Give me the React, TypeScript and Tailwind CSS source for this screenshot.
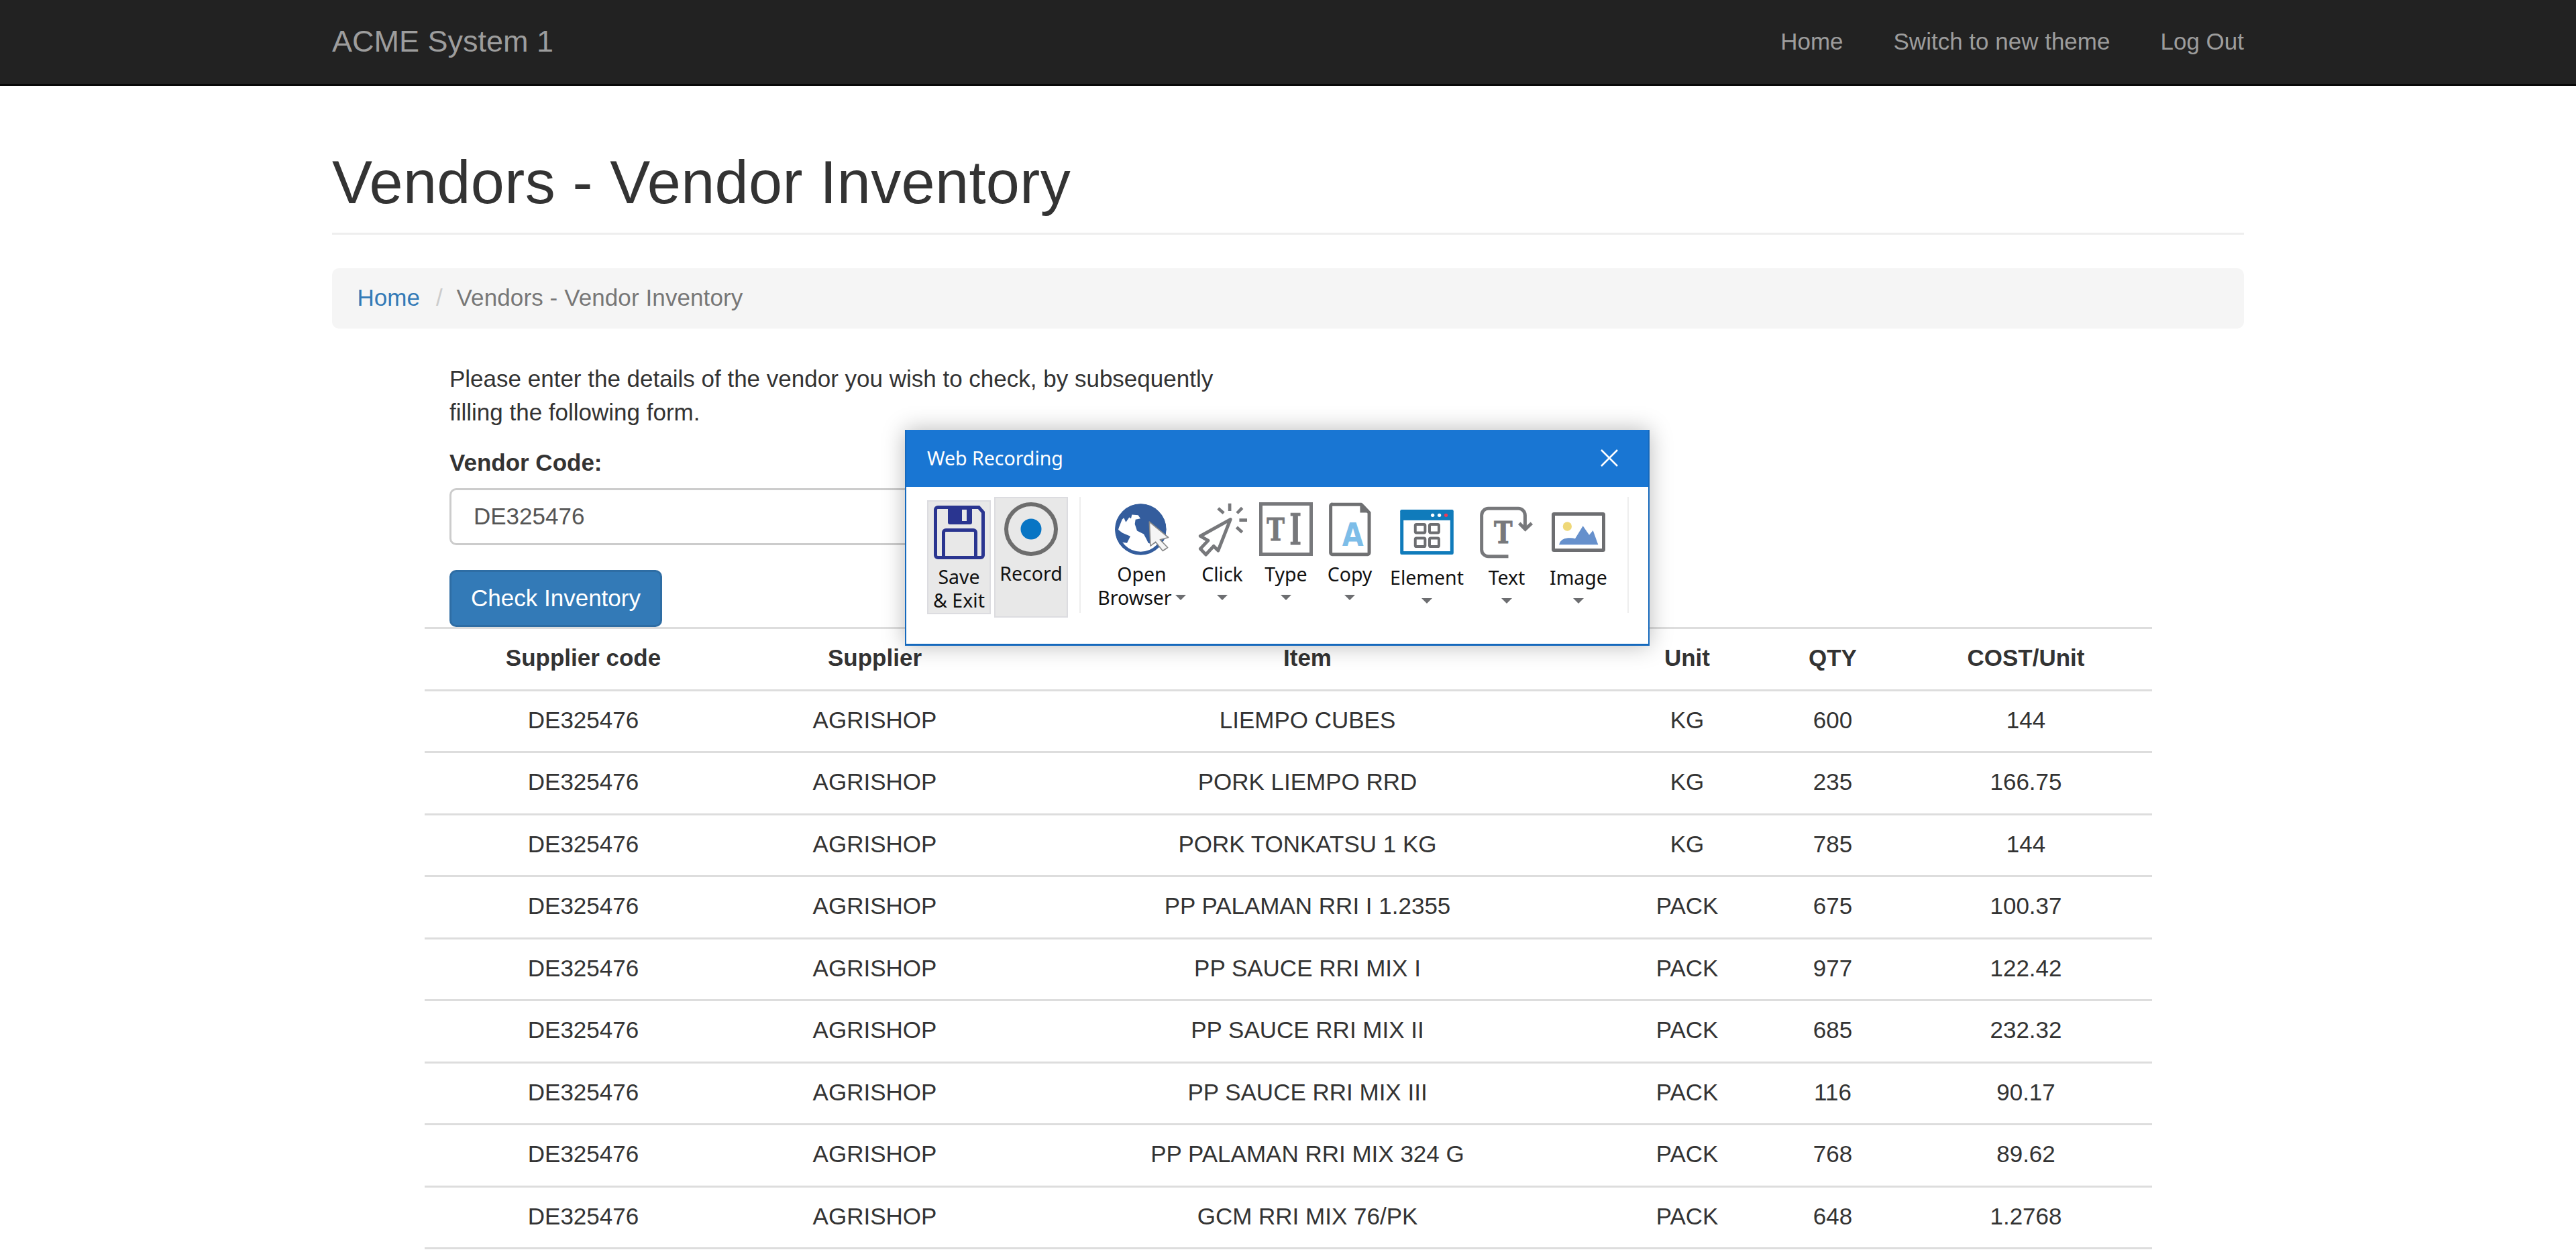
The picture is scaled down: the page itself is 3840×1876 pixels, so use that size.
import React from 'react';

const columns = 'grid grid-cols-[473px_396px_894px_238px_196px_380px]';

const inventory = [
  { item: 'LIEMPO CUBES', unit: 'KG', qty: '600', cost: '144' },
  { item: 'PORK LIEMPO RRD', unit: 'KG', qty: '235', cost: '166.75' },
  { item: 'PORK TONKATSU 1 KG', unit: 'KG', qty: '785', cost: '144' },
  { item: 'PP PALAMAN RRI I 1.2355', unit: 'PACK', qty: '675', cost: '100.37' },
  { item: 'PP SAUCE RRI MIX I', unit: 'PACK', qty: '977', cost: '122.42' },
  { item: 'PP SAUCE RRI MIX II', unit: 'PACK', qty: '685', cost: '232.32' },
  { item: 'PP SAUCE RRI MIX III', unit: 'PACK', qty: '116', cost: '90.17' },
  { item: 'PP PALAMAN RRI MIX 324 G', unit: 'PACK', qty: '768', cost: '89.62' },
  { item: 'GCM RRI MIX 76/PK', unit: 'PACK', qty: '648', cost: '1.2768' },
];

const Row: React.FC<{ cells: string[]; head?: boolean }> = ({ cells, head }) => (
  <div className={`${columns} h-[92.5px] items-center border-b-[3px] border-[#ddd] pb-[3px] text-center ${head ? 'font-bold' : ''}`}>
    {cells.map((c, i) => (
      <div key={i}>{c}</div>
    ))}
  </div>
);

const SaveIcon = () => (
  <svg width="76" height="80" viewBox="0 0 76 80">
    <path d="M6 2.5H67L73.5 10V74a3.500 3.500 0 0 1-3.500 3.500H6A3.500 3.500 0 0 1 2.500 74V6A3.500 3.500 0 0 1 6 2.500Z" fill="none" stroke="#2a3590" strokeWidth="5" />
    <path d="M21 1H57V25a3 3 0 0 1-3 3H24a3 3 0 0 1-3-3Z" fill="#2a3590" />
    <rect x="42" y="6" width="7" height="17" fill="#e8e8e8" />
    <path d="M14.500 78V40a3.500 3.500 0 0 1 3.500-3.500H59a3.500 3.500 0 0 1 3.500 3.500V78" fill="none" stroke="#2a3590" strokeWidth="5" />
  </svg>
);

const RecordIcon = () => (
  <svg width="80" height="80" viewBox="0 0 80 80">
    <circle cx="40" cy="40" r="37" fill="none" stroke="#6d6d6d" strokeWidth="6" />
    <circle cx="40" cy="40" r="15.500" fill="#0875c4" />
  </svg>
);

const GlobeIcon = () => (
  <svg width="85" height="82" viewBox="30 20 255 245">
    <circle cx="151" cy="144" r="114" fill="#345d9d" />
    <path d="M58 125L68 100L76 92L85 112L100 90L108 95L112 78L140 80L150 95L128 100L125 120L135 150L165 165L178 190L185 205L200 210L240 200L240 262L100 262L60 200L90 205L105 175L70 160L50 145Z" fill="#fff" />
    <circle cx="151" cy="144" r="107" fill="none" stroke="#345d9d" strokeWidth="15" />
    <path d="M190 110L275 180L238 190L272 225L250 240L218 200L195 218Z" fill="#f5f5f5" stroke="#8a8a8a" strokeWidth="5" strokeLinejoin="round" />
  </svg>
);

const ClickIcon = () => (
  <svg width="77" height="83" viewBox="400 20 230 250">
    <path d="M550 100L415 175L450 195L415 232L440 258L475 220L495 240Z" fill="none" stroke="#77787b" strokeWidth="15" strokeLinejoin="round" />
    <path d="M547 28V62M590 103H625M495 50L520 72M580 72L603 48M578 135L603 158" fill="none" stroke="#77787b" strokeWidth="14" />
  </svg>
);

const TypeIcon = () => (
  <svg width="80" height="80" viewBox="21 27 240 240">
    <rect x="28.500" y="34.500" width="225" height="225" fill="none" stroke="#77787b" strokeWidth="15" />
    <text x="55" y="197" fontFamily="'DejaVu Serif', serif" fontWeight="700" fontSize="140" textLength="80" lengthAdjust="spacingAndGlyphs" fill="#77787b" stroke="#77787b" strokeWidth="3">T</text>
    <text x="157" y="215" fontFamily="'DejaVu Serif', serif" fontWeight="700" fontSize="188" textLength="53" lengthAdjust="spacingAndGlyphs" fill="#77787b" stroke="#77787b" strokeWidth="3">I</text>
  </svg>
);

const CopyIcon = () => (
  <svg width="67" height="83" viewBox="325 22 200 250">
    <path d="M345 34.500H475L511 72V252a7 7 0 0 1-7 7H345a7 7 0 0 1-7-7V41a7 7 0 0 1 7-7Z" fill="none" stroke="#6f7072" strokeWidth="15" strokeLinejoin="round" />
    <path d="M470 30L518 72H470Z" fill="#6f7072" />
    <text x="437.500" y="222" textAnchor="middle" fontFamily="'DejaVu Sans', sans-serif" fontWeight="700" fontSize="145" textLength="96" lengthAdjust="spacingAndGlyphs" fill="#7dbde8">A</text>
  </svg>
);

const ElementIcon = () => (
  <svg width="80" height="67" viewBox="651 60 240 202">
    <rect x="651" y="60" width="240" height="202" rx="7" fill="#107bbb" />
    <rect x="666" y="108" width="210" height="139" fill="#fff" />
    <circle cx="797" cy="85" r="8" fill="#fff" />
    <circle cx="827" cy="85" r="8" fill="#fff" />
    <circle cx="857" cy="85" r="8" fill="#ef3b56" />
    <g fill="none" stroke="#6d6e71" strokeWidth="12">
      <rect x="719" y="126" width="44" height="38" rx="5" />
      <rect x="783" y="126" width="42" height="38" rx="5" />
      <rect x="719" y="188" width="44" height="38" rx="5" />
      <rect x="783" y="188" width="42" height="38" rx="5" />
    </g>
  </svg>
);

const TextIcon = () => (
  <svg width="82" height="78" viewBox="35 28 245 235">
    <path d="M165 253H75A30 30 0 0 1 45 223V68A30 30 0 0 1 75 38H210A30 30 0 0 1 240 68V130" fill="none" stroke="#77787b" strokeWidth="15" />
    <path d="M214 104L241 131L270 104" fill="none" stroke="#77787b" strokeWidth="15" />
    <text x="100" y="195" fontFamily="'DejaVu Serif', serif" fontWeight="700" fontSize="137" textLength="83" lengthAdjust="spacingAndGlyphs" fill="#77787b" stroke="#77787b" strokeWidth="3">T</text>
  </svg>
);

const ImageIcon = () => (
  <svg width="80" height="59" viewBox="357 57 240 177">
    <rect x="364.500" y="64.500" width="225" height="162" rx="3" fill="none" stroke="#6d6e71" strokeWidth="15" />
    <circle cx="427" cy="120" r="20" fill="#efd878" />
    <path d="M390 202Q395 175 430 172Q450 170 462 175L497 118L525 158L542 138L565 202Z" fill="#6690cc" />
  </svg>
);

const Caret = () => (
  <span className="inline-block h-0 w-0 border-x-[8px] border-t-[8px] border-x-transparent border-t-[#6d6e71]" />
);

// tall = the Element/Text/Image group sits 5px lower than the first group
const Tool: React.FC<{
  width: string;
  tall?: boolean;
  label: string;
  label2?: string;
  children: React.ReactNode;
}> = ({ width, tall, label, label2, children }) => (
  <div className={`${width} mt-[8px] flex flex-col items-center`}>
    <div className={`flex items-center justify-center ${tall ? 'h-[89px]' : 'h-[80px]'}`}>{children}</div>
    <div className={`${tall ? 'mt-[5.5px]' : 'mt-[9.5px]'} leading-[35px]`}>{label}</div>
    <div className="flex h-[35px] items-center gap-[5px] leading-[35px]">
      {label2 && <span>{label2}</span>}
      <Caret />
    </div>
  </div>
);

const RecordingToolbar = () => (
  <div className="absolute left-[1349px] top-[641px] h-[322px] w-[1110px] border-x-[2px] border-b-[3px] border-[#1569bd] bg-white font-['Noto_Sans',sans-serif] text-[28.5px] text-[#111] shadow-[0_0_32px_rgba(0,0,0,0.28)]">
    <div className="flex h-[85px] items-center justify-between bg-[#1976d3] pb-[2px] pl-[31px] pr-[45px] text-white">
      <span>Web Recording</span>
      <svg width="26" height="26" viewBox="0 0 26 26">
        <path d="M1 1L25 25M25 1L1 25" stroke="#fff" strokeWidth="2.500" />
      </svg>
    </div>
    <div className="flex items-start pl-[31px] pt-[15px]">
      <div className="mt-[5px] flex h-[170px] w-[95px] flex-col items-center border-2 border-[#dcdce0] bg-[#e8e8e8] pt-[6px] leading-[35px]">
        <SaveIcon />
        <div className="mt-[9px]">Save</div>
        <div>&amp; Exit</div>
      </div>
      <div className="ml-[5px] flex h-[180px] w-[110px] flex-col items-center border-2 border-[#dcdce0] bg-[#e8e8e8] pt-[6px] leading-[35px]">
        <RecordIcon />
        <div className="mt-[9px]">Record</div>
      </div>
      <div className="ml-[17px] h-[173px] w-[2px] bg-[#eee]" />
      <div className="ml-[20px] flex">
        <Tool width="w-[142px]" label="Open" label2="Browser"><GlobeIcon /></Tool>
        <Tool width="w-[98px]" label="Click"><ClickIcon /></Tool>
        <Tool width="w-[92px]" label="Type"><TypeIcon /></Tool>
        <Tool width="w-[98px]" label="Copy"><CopyIcon /></Tool>
        <Tool width="w-[132px]" tall label="Element"><ElementIcon /></Tool>
        <Tool width="w-[106px]" tall label="Text"><TextIcon /></Tool>
        <Tool width="w-[108px]" tall label="Image"><ImageIcon /></Tool>
      </div>
      <div className="ml-[19px] h-[173px] w-[2px] bg-[#eee]" />
    </div>
  </div>
);

export default function App() {
  return (
    <div className="relative min-h-screen bg-white font-['Liberation_Sans',Arial,sans-serif] text-[35px] leading-[50px] text-[#333]">
      <nav className="h-[128px] border-b-[3px] border-[#080808] bg-[#222]">
        <div className="mx-auto flex h-[125px] w-[2850px] items-center justify-between pb-[2px] text-[#9d9d9d]">
          <a className="text-[45px]">ACME System 1</a>
          <div className="flex gap-[75px]">
            <a>Home</a>
            <a>Switch to new theme</a>
            <a>Log Out</a>
          </div>
        </div>
      </nav>

      <main className="mx-auto w-[2850px] pt-[95px]">
        <h1 className="border-b-[3px] border-[#eee] pb-[25px] text-[90px] leading-[99px] tracking-[0.4px]">Vendors - Vendor Inventory</h1>

        <div className="mt-[50px] flex h-[90px] items-center rounded-[10px] bg-[#f5f5f5] px-[37.5px] pb-[2px]">
          <a className="text-[#337ab7]">Home</a>
          <span className="pl-[24px] pr-[21px] text-[#ccc]">/</span>
          <span className="tracking-[0.1px] text-[#777]">Vendors - Vendor Inventory</span>
        </div>

        <div className="ml-[175px] mt-[50px]">
          <p className="w-[1180px]">Please enter the details of the vendor you wish to check, by subsequently filling the following form.</p>
          <label className="mt-[25px] block font-bold">Vendor Code:</label>
          <input
            readOnly
            value="DE325476"
            className="mt-[12.5px] block h-[85px] w-[1200px] rounded-[10px] border-[3px] border-[#ccc] bg-white px-[33px] text-[#555] outline-none"
          />
          <button className="mt-[37.5px] block h-[85px] w-[317px] rounded-[10px] border-[3px] border-[#2e6da4] bg-[#337ab7] pb-[2px] text-white">
            Check Inventory
          </button>
        </div>

        <div className="ml-[138px] w-[2575px]">
          <div className="border-t-[3px] border-[#ddd]" />
          <Row head cells={['Supplier code', 'Supplier', 'Item', 'Unit', 'QTY', 'COST/Unit']} />
          {inventory.map((row, i) => (
            <Row key={i} cells={['DE325476', 'AGRISHOP', row.item, row.unit, row.qty, row.cost]} />
          ))}
        </div>
      </main>

      <RecordingToolbar />
    </div>
  );
}
